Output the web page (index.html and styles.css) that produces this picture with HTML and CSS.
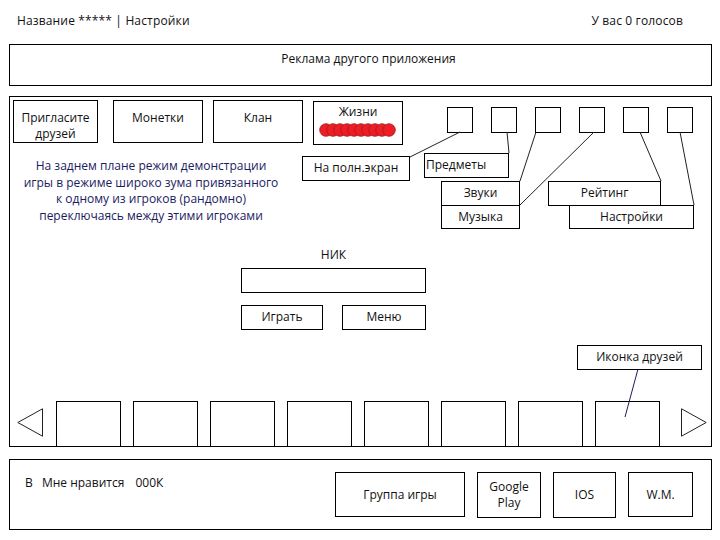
FILE: index.html
```html
<!DOCTYPE html>
<html lang="ru">
<head>
    <meta charset="UTF-8">
    <meta name="viewport" content="width=device-width, initial-scale=1.0">
    <title>Главный экран — макет</title>
    <link rel="stylesheet" href="styles.css">
</head>
<body>
    <header class="topbar">
        <span>Название ***** | Настройки</span>
        <span>У вас 0 голосов</span>
    </header>

    <div class="ad">Реклама другого приложения</div>

    <main class="screen">
        <div class="top-row">
            <div class="tile tile-invite">Пригласите<br>друзей</div>
            <div class="tile tile-coins">Монетки</div>
            <div class="tile tile-clan">Клан</div>
            <div class="tile tile-lives">
                Жизни
                <svg class="lives" width="78" height="14" viewBox="0 0 78 14">
                    <circle cx="7" cy="7" r="6.3"/>
                    <circle cx="14" cy="7" r="6.3"/>
                    <circle cx="21" cy="7" r="6.3"/>
                    <circle cx="28" cy="7" r="6.3"/>
                    <circle cx="35" cy="7" r="6.3"/>
                    <circle cx="42" cy="7" r="6.3"/>
                    <circle cx="49" cy="7" r="6.3"/>
                    <circle cx="56" cy="7" r="6.3"/>
                    <circle cx="63" cy="7" r="6.3"/>
                    <circle cx="70" cy="7" r="6.3"/>
                </svg>
            </div>
            <div class="slots">
                <span class="slot"></span>
                <span class="slot"></span>
                <span class="slot"></span>
                <span class="slot"></span>
                <span class="slot"></span>
                <span class="slot"></span>
            </div>
        </div>

        <p class="demo">На заднем плане режим демонстрации<br>игры в режиме широко зума привязанного<br>к одному из игроков (рандомно)<br>переключаясь между этими игроками</p>

        <div class="login">
            <div class="login-label">НИК</div>
            <div class="nick-field"></div>
            <div class="login-buttons">
                <div class="btn btn-play">Играть</div>
                <div class="btn btn-menu">Меню</div>
            </div>
        </div>

        <div class="carousel">
            <svg class="arrow arrow-left" width="26" height="29" viewBox="0 0 26 29">
                <polygon points="0.8,14.5 25.5,0.8 25.5,28.2"/>
            </svg>
            <div class="friends">
                <span class="friend"></span>
                <span class="friend"></span>
                <span class="friend"></span>
                <span class="friend"></span>
                <span class="friend"></span>
                <span class="friend"></span>
                <span class="friend"></span>
                <span class="friend"></span>
            </div>
            <svg class="arrow arrow-right" width="26" height="29" viewBox="0 0 26 29">
                <polygon points="0.5,0.8 0.5,28.2 25.2,14.5"/>
            </svg>
        </div>

        <!-- подписи к иконкам -->
        <svg class="leaders" width="701" height="349" viewBox="0 0 701 349">
            <line x1="450" y1="35" x2="400" y2="60"/>
            <line x1="497" y1="35" x2="499" y2="56"/>
            <line x1="526" y1="35" x2="510" y2="84"/>
            <line x1="584" y1="35" x2="510" y2="108"/>
            <line x1="630" y1="35" x2="651" y2="84"/>
            <line x1="670" y1="35" x2="684" y2="108"/>
            <line class="leader-blue" x1="628" y1="272" x2="615" y2="320"/>
        </svg>
        <div class="note note-full">На полн.экран</div>
        <div class="note note-items">Предметы</div>
        <div class="note note-sounds">Звуки</div>
        <div class="note note-music">Музыка</div>
        <div class="note note-rating">Рейтинг</div>
        <div class="note note-settings">Настройки</div>
        <div class="note note-friends">Иконка друзей</div>
    </main>

    <footer class="bottom">
        <div class="likes">
            <span>В</span>
            <span class="likes-text">Мне нравится</span>
            <span class="likes-count">000К</span>
        </div>
        <div class="link link-group">Группа игры</div>
        <div class="link link-gp">Google<br>Play</div>
        <div class="link link-ios">IOS</div>
        <div class="link link-wm">W.M.</div>
    </footer>
</body>
</html>
```

FILE: styles.css
```css
body {
    margin: 0;
    width: 720px;
    font-family: 'Open Sans', 'Liberation Sans', sans-serif;
    font-size: 12px;
    line-height: 16px;
    color: #111;
    background: #fff;
}
.topbar {
    display: flex;
    justify-content: space-between;
    height: 44px;
    box-sizing: border-box;
    padding: 13px 37px 0 17px;
    letter-spacing: 0.15px;
}
.ad {
    box-sizing: border-box;
    width: 703px;
    height: 42px;
    margin-left: 9px;
    padding: 6px 0 0 16px;
    border: 1px solid #000;
    text-align: center;
}

/* основной экран */
.screen {
    position: relative;
    display: flex;
    flex-direction: column;
    box-sizing: border-box;
    width: 703px;
    height: 351px;
    margin: 10px 0 0 9px;
    border: 1px solid #000;
}
.top-row {
    display: flex;
    align-items: flex-start;
    padding: 3px 0 0 3px;
}
.tile {
    box-sizing: border-box;
    width: 90px;
    height: 43px;
    padding-top: 9px;
    border: 1px solid #000;
    text-align: center;
}
.tile-invite {
    width: 85px;
}
.tile-coins {
    margin-left: 15px;
}
.tile-clan,
.tile-lives {
    margin-left: 10px;
}
.tile-lives {
    height: 44px;
    margin-top: 1px;
    padding-top: 2px;
}
.lives {
    display: block;
    margin: 3px auto 0;
}
.lives circle {
    fill: #ee1c24;
    stroke: #9a1d1d;
    stroke-width: 0.8;
}
.slots {
    display: flex;
    gap: 18px;
    margin: 7px 0 0 44px;
}
.slot {
    box-sizing: border-box;
    width: 26px;
    height: 26px;
    border: 1px solid #000;
}
.demo {
    width: 282px;
    margin: 13px 0 0 0;
    line-height: 16.5px;
    text-align: center;
    color: #1b1b62;
}
.login {
    width: 185px;
    margin: 23px 0 0 231px;
}
.login-label {
    text-align: center;
}
.nick-field {
    box-sizing: border-box;
    height: 25px;
    margin-top: 5px;
    border: 1px solid #000;
}
.login-buttons {
    display: flex;
    justify-content: space-between;
    margin-top: 12px;
}
.btn {
    box-sizing: border-box;
    height: 25px;
    padding-top: 3px;
    border: 1px solid #000;
    text-align: center;
}
.btn-play {
    width: 82px;
}
.btn-menu {
    width: 84px;
}
.carousel {
    display: flex;
    align-items: flex-start;
    margin-top: auto;
    padding-left: 7px;
}
.arrow {
    margin-top: 7px;
}
.arrow polygon {
    fill: none;
    stroke: #222;
    stroke-width: 1;
}
.friends {
    display: flex;
    gap: 12px;
    margin-left: 13px;
}
.friend {
    box-sizing: border-box;
    width: 65px;
    height: 45px;
    border: 1px solid #000;
    border-bottom: none;
}
.arrow-right {
    margin-left: 21px;
}

/* выноски */
.leaders {
    position: absolute;
    left: 0;
    top: 0;
    pointer-events: none;
}
.leaders line {
    stroke: #222;
    stroke-width: 1;
}
.leaders .leader-blue {
    stroke: #1b1b62;
}
.note {
    position: absolute;
    box-sizing: border-box;
    height: 25px;
    padding-top: 3px;
    border: 1px solid #000;
    background: #fff;
    text-align: center;
}
.note-full { left: 292px; top: 59px; width: 108px; }
.note-items { left: 414px; top: 56px; width: 85px; text-align: left; padding-left: 1px; }
.note-sounds { left: 431px; top: 84px; width: 79px; }
.note-music { left: 431px; top: 108px; width: 79px; height: 24px; }
.note-rating { left: 538px; top: 84px; width: 113px; }
.note-settings { left: 559px; top: 108px; width: 125px; height: 24px; }
.note-friends { left: 567px; top: 248px; width: 125px; }

/* нижняя панель */
.bottom {
    display: flex;
    align-items: center;
    gap: 12px;
    box-sizing: border-box;
    width: 703px;
    height: 71px;
    margin: 12px 0 0 9px;
    padding: 0 18px 0 15px;
    border: 1px solid #000;
}
.likes {
    flex: 1;
    align-self: flex-start;
    margin-top: 15px;
}
.likes-text {
    margin-left: 6px;
}
.likes-count {
    margin-left: 8px;
}
.link {
    box-sizing: border-box;
    display: flex;
    align-items: center;
    justify-content: center;
    height: 46px;
    border: 1px solid #000;
    text-align: center;
}
.link-group { width: 130px; height: 45px; }
.link-gp { width: 64px; }
.link-ios { width: 63px; }
.link-wm { width: 65px; height: 45px; }
```
